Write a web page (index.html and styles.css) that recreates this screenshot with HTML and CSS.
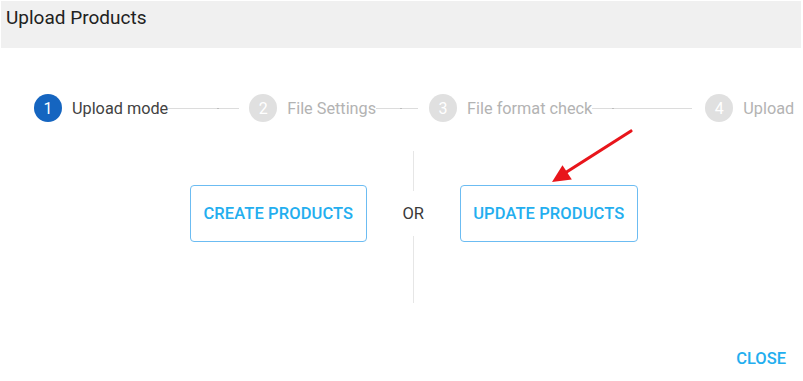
FILE: index.html
```html
<!DOCTYPE html>
<html>
<head>
<meta charset="utf-8">
<link rel="stylesheet" href="styles.css">
</head>
<body>
<div class="dialog">
  <div class="header">Upload Products</div>

  <div class="stepper">
    <div class="step step-active">
      <span class="circle">1</span><span class="label">Upload mode</span>
    </div>
    <div class="line line-1"></div>
    <div class="step">
      <span class="circle">2</span><span class="label">File Settings</span>
    </div>
    <div class="line line-2"></div>
    <div class="step">
      <span class="circle">3</span><span class="label">File format check</span>
    </div>
    <div class="line line-3"></div>
    <div class="step">
      <span class="circle">4</span><span class="label">Upload</span>
    </div>
  </div>

  <div class="choices">
    <button class="choice-btn">CREATE PRODUCTS</button>
    <div class="or-col">
      <div class="vline vline-top"></div>
      <div class="or">OR</div>
      <div class="vline vline-bottom"></div>
    </div>
    <button class="choice-btn">UPDATE PRODUCTS</button>
  </div>

  <div class="footer">
    <button class="close-btn">CLOSE</button>
  </div>

  <svg class="arrow" width="803" height="381" viewBox="0 0 803 381">
    <line x1="631" y1="130" x2="565" y2="172" stroke="#e8151b" stroke-width="3.2" stroke-linecap="round"/>
    <polygon points="552,181 562.5,164.2 571.8,178.4" fill="#e8151b"/>
  </svg>
</div>
</body>
</html>
```

FILE: styles.css
```css
* { box-sizing: border-box; }
html, body { margin: 0; padding: 0; background: #fff; }
body {
  font-family: Roboto, "Noto Sans", "Liberation Sans", sans-serif;
  width: 803px;
  height: 381px;
  overflow: hidden;
}
.dialog {
  position: relative;
  width: 803px;
  height: 381px;
}
.header {
  margin: 1px 2px 0 1px;
  height: 47px;
  background: #f0f0f0;
  padding: 5px 5px 0;
  font-size: 19px;
  line-height: 24px;
  color: #212121;
}
.stepper {
  display: flex;
  align-items: center;
  margin-top: 46px;
  padding-left: 34px;
  height: 28px;
}
.step {
  display: flex;
  align-items: center;
  flex: none;
}
.circle {
  width: 28px;
  height: 28px;
  border-radius: 50%;
  background: #e0e0e0;
  color: #fff;
  font-size: 16px;
  display: flex;
  align-items: center;
  justify-content: center;
}
.step-active .circle { background: #1565c0; }
.label {
  margin-left: 10px;
  font-size: 16.25px;
  color: #b3b3b3;
  white-space: nowrap;
}
.step-active .label { color: #424242; }
.line {
  position: relative;
  height: 1px;
  background: #dcdcdc;
  margin-right: 10px;
  flex: none;
}
.line::after {
  content: "";
  position: absolute;
  top: 0;
  width: 2px;
  height: 1px;
  background: #bdbdbd;
}
.line-1 { width: 71px; }
.line-1::after { left: 49px; }
.line-2 { width: 42px; margin-right: 11px; }
.line-2::after { left: 24px; }
.line-3 { width: 100px; margin-right: 13px; }
.line-3::after { left: 20px; }

.choices {
  display: flex;
  align-items: flex-start;
  margin-top: 29px;
  padding-left: 190px;
}
.choice-btn {
  margin-top: 34px;
  height: 57px;
  padding: 0 12.5px;
  border: 1px solid #6cbcf2;
  border-radius: 4px;
  background: #fff;
  color: #23aeef;
  font-family: Roboto, "Noto Sans", sans-serif;
  font-size: 16.5px;
  font-weight: 500;
  letter-spacing: 0.1px;
  cursor: pointer;
}
.or-col {
  width: 93px;
  display: flex;
  flex-direction: column;
  align-items: center;
}
.vline {
  width: 1px;
  background: #e6e6e6;
}
.vline-top { height: 40px; }
.vline-bottom { height: 67px; }
.or {
  height: 45px;
  line-height: 45px;
  font-size: 16.5px;
  color: #3a3a3a;
}
.footer {
  display: flex;
  justify-content: flex-end;
  margin-top: 46px;
  padding-right: 17px;
}
.close-btn {
  border: 0;
  padding: 0;
  background: transparent;
  color: #23aeef;
  font-family: Roboto, "Noto Sans", sans-serif;
  font-size: 16.5px;
  font-weight: 500;
  line-height: 20px;
  cursor: pointer;
}
.arrow {
  position: absolute;
  left: 0;
  top: 0;
  pointer-events: none;
}
```
